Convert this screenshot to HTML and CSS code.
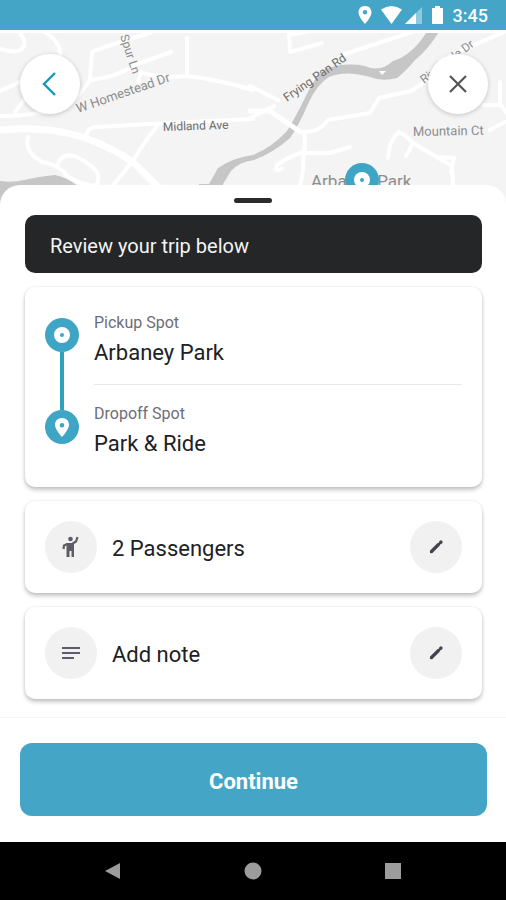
FILE: index.html
```html
<!DOCTYPE html>
<html lang="en">
<head>
<meta charset="utf-8">
<meta name="viewport" content="width=device-width, initial-scale=1">
<title>Review your trip</title>
<link rel="stylesheet" href="styles.css">
</head>
<body>
<div class="screen">
  <header class="status">
    <svg class="status-icons" width="84" height="20" viewBox="0 0 84 20" aria-hidden="true">
      <path fill="#fff" fill-rule="evenodd" d="M6 1C2 1-.5 3.800-.5 7.500-.5 12 6 19 6 19S12.500 12 12.500 7.500C12.500 3.800 10 1 6 1ZM6 5A2.200 2.200 0 1 1 6 9.400 2.200 2.200 0 0 1 6 5Z"/>
      <path fill="#fff" d="M22 4.500Q32.500-2.500 43 4.500L32.500 19Z"/>
      <path fill="#fff" opacity=".4" d="M63 2V19H46Z"/>
      <path fill="#fff" d="M57 8V19H46Z"/>
      <path fill="#fff" d="M76 1H81V3H84V19H73V3H76Z"/>
    </svg>
    <time class="clock">3:45</time>
  </header>

  <section class="map" aria-label="Map">
    <svg class="map-art" viewBox="0 30 506 180" preserveAspectRatio="xMidYMin slice">
      <rect y="30" width="506" height="180" fill="#f4f4f4"/>
      <g fill="#c6c6c6">
        <path d="M0 181Q12 183 24 180Q42 176 55 175Q66 177 78 186V210H0Z"/>
        <path d="M199 184H209L218 168Q232 158 253 155Q271 148 287 131Q295 118 306 96Q314 78 325 69Q345 62 365 66Q380 73 393 61Q413 55 428 30H440Q429 49 415 60Q405 72 397 78Q382 82 370 77Q345 70 329 77Q317 84 308 104Q298 127 290 138Q273 153 254 160Q239 162 231 171L223 184V190H199Z"/>
      </g>
      <g fill="none" stroke="#fff" stroke-width="4" stroke-linecap="round" stroke-linejoin="round">
        <path d="M0 31H506"/>
        <path d="M0 49Q20 55 24 46Q26 39 18 31"/>
        <path d="M43 31Q59 40 60 52V65"/>
        <path d="M0 91L22 81M15 112L24 100"/>
        <path d="M0 116Q45 116 70 103Q80 96 90 80Q115 78 135 65L171 52"/>
        <path d="M90 78L92 52Q112 44 150 33"/>
        <path d="M187 38V73M138 82L141 72Q157 79 187 76Q221 80 253 90"/>
        <path d="M86 138Q86 128 96 127L150 124L253 119"/>
        <path d="M28 137Q24 152 42 162Q60 165 67 176Q80 185 98 186"/>
        <path d="M58 164Q62 153 74 156Q89 162 97 172Q100 179 96 186"/>
        <path d="M159 124Q147 138 134 159L112 187"/>
        <path d="M289 35L290 52L322 43M289 35L310 31"/>
        <path d="M345 54L418 30M250 118L274 106M250 86L278 100"/>
        <path d="M300 132Q320 133 328 120L370 113L379 98L411 91L428 80"/>
        <path d="M304 133Q306 146 303 160Q305 171 298 190M306 153L330 153L350 147"/>
        <path d="M303 152Q286 158 277 165Q274 173 282 169"/>
        <path d="M440 60L506 31M483 105H500M500 82V104L506 112M490 130L505 122"/>
        <path d="M388 158Q389 140 399 132Q407 136 413 143L406 156M413 143L452 166L453 185M440 157L454 158L451 172"/>
      </g>
      <g fill="none" stroke="#fff" stroke-width="7" stroke-linecap="round">
        <path d="M0 130Q45 126 79 136Q118 149 137 166L158 187"/>
      </g>
      <path d="M250 111H270L299 131" fill="none" stroke="#fff" stroke-width="5" stroke-linecap="round"/>
      <path d="M379 71H386L382 75Z" fill="#fff"/>
      <g class="street">
        <text transform="translate(120 36) rotate(72)">Spur Ln</text>
        <text class="street-wide" transform="translate(78 113) rotate(-19)">W Homestead Dr</text>
        <text class="street-main" transform="translate(163 131) rotate(-2)">Midland Ave</text>
        <text class="street-main" transform="translate(287 102) rotate(-35)">Frying Pan Rd</text>
        <text transform="translate(424 84) rotate(-37)">Riverside Dr</text>
        <text class="street-wide" transform="translate(413 136) rotate(-1)">Mountain Ct</text>
      </g>
      <text class="place" x="311" y="187">Arbaney Park</text>
      <circle cx="362" cy="180" r="17" fill="#3fa5c4"/>
      <circle cx="362" cy="180" r="8" fill="#fff"/>
      <circle cx="362" cy="180" r="2" fill="#3fa5c4"/>
    </svg>
    <div class="map-actions">
      <button class="round" type="button" aria-label="Back">
        <svg width="24" height="24" viewBox="0 0 24 24" fill="none" stroke="#149ab8" stroke-width="2.400"><path d="M17 1L6 12L17 23"/></svg>
      </button>
      <button class="round" type="button" aria-label="Close">
        <svg width="20" height="20" viewBox="0 0 20 20" fill="none" stroke="#555" stroke-width="2.200"><path d="M2 2L18 18M18 2L2 18"/></svg>
      </button>
    </div>
  </section>

  <main class="sheet">
    <div class="grabber"></div>
    <div class="content">
      <h1 class="banner">Review your trip below</h1>

      <section class="card trip">
        <div class="route">
          <svg width="34" height="34" viewBox="0 0 34 34" aria-hidden="true"><circle cx="17" cy="17" r="17" fill="#3fa5c4"/><circle cx="17" cy="17" r="8" fill="#fff"/><circle cx="17" cy="17" r="2" fill="#3fa5c4"/></svg>
          <div class="route-line"></div>
          <svg width="34" height="34" viewBox="0 0 34 34" aria-hidden="true"><circle cx="17" cy="17" r="17" fill="#3fa5c4"/><path fill="#fff" fill-rule="evenodd" d="M17 8C12.500 8 10 11 10 15C10 19.500 17 27 17 27S24 19.500 24 15C24 11 21.500 8 17 8ZM17 13A2.300 2.300 0 1 1 17 17.600 2.300 2.300 0 0 1 17 13Z"/></svg>
        </div>
        <dl class="stops">
          <div class="stop"><dt>Pickup Spot</dt><dd>Arbaney Park</dd></div>
          <div class="stop"><dt>Dropoff Spot</dt><dd>Park &amp; Ride</dd></div>
        </dl>
      </section>

      <section class="card option">
        <span class="disc">
          <svg width="20" height="24" viewBox="0 0 20 24" aria-hidden="true"><circle cx="9.500" cy="4" r="2.300" fill="#5c5c66"/><path d="M16.500 2L15 6.500L11 9H6L3 10.500L2.500 14" fill="none" stroke="#5c5c66" stroke-width="2.200"/><path d="M5.500 8H13V22H10.500V16H8.500V22H5.500Z" fill="#5c5c66"/></svg>
        </span>
        <span class="option-text">2 Passengers</span>
        <button class="disc" type="button" aria-label="Edit passengers">
          <svg width="16" height="16" viewBox="0 0 16 16" aria-hidden="true"><path d="M3.500 12.500L10.500 5.500M12.500 3.500L13 3" fill="none" stroke="#44444f" stroke-width="3.200" stroke-linecap="round"/><path d="M2 11V14H5Z" fill="#44444f"/></svg>
        </button>
      </section>

      <section class="card option">
        <span class="disc">
          <svg width="18" height="14" viewBox="0 0 18 14" aria-hidden="true"><path d="M0 2H18M0 7H18M0 12H12" stroke="#5c5c6a" stroke-width="2"/></svg>
        </span>
        <span class="option-text">Add note</span>
        <button class="disc" type="button" aria-label="Edit note">
          <svg width="16" height="16" viewBox="0 0 16 16" aria-hidden="true"><path d="M3.500 12.500L10.500 5.500M12.500 3.500L13 3" fill="none" stroke="#44444f" stroke-width="3.200" stroke-linecap="round"/><path d="M2 11V14H5Z" fill="#44444f"/></svg>
        </button>
      </section>
    </div>
    <div class="footer">
      <button class="continue" type="button">Continue</button>
    </div>
  </main>

  <nav class="system" aria-label="System">
    <button type="button" aria-label="Back"><svg width="18" height="18" viewBox="0 0 18 18"><path d="M16 1V17L1 9Z" fill="#9c9c9c"/></svg></button>
    <button type="button" aria-label="Home"><svg width="18" height="18" viewBox="0 0 18 18"><circle cx="9" cy="9" r="8.500" fill="#9c9c9c"/></svg></button>
    <button type="button" aria-label="Recent apps"><svg width="18" height="18" viewBox="0 0 18 18"><path d="M1 1H17V17H1Z" fill="#9c9c9c"/></svg></button>
  </nav>
</div>
</body>
</html>
```
FILE: styles.css
```css
* { box-sizing: border-box; }

body {
  margin: 0;
  background: #fff;
  color: #202124;
  font-family: Roboto, "Liberation Sans", sans-serif;
}

button {
  border: 0;
  padding: 0;
  font: inherit;
  cursor: pointer;
}

.screen {
  display: flex;
  flex-direction: column;
  min-height: 100vh;
}

.status {
  display: flex;
  align-items: center;
  justify-content: flex-end;
  gap: 10px;
  height: 30px;
  padding: 0 18px;
  background: #45a5c6;
  color: #fff;
}

.status-icons { overflow: visible; }

.clock {
  padding-top: 2px;
  font-size: 18px;
  font-weight: 500;
  line-height: 28px;
}

.map {
  position: relative;
  height: 180px;
  overflow: hidden;
}

.map-art {
  position: absolute;
  inset: 0;
  width: 100%;
  height: 100%;
}

.street {
  font-size: 12px;
  fill: #8d8d8d;
}

.street-main { fill: #6c6c6c; }

.street-wide { font-size: 13px; }

.place {
  font-size: 17px;
  fill: #8d8d8d;
}

.map-actions {
  position: relative;
  display: flex;
  justify-content: space-between;
  padding: 24px 18px 0 20px;
}

.round {
  display: flex;
  align-items: center;
  justify-content: center;
  width: 60px;
  height: 60px;
  border-radius: 50%;
  background: #fff;
  box-shadow: 0 1px 5px rgba(0, 0, 0, 0.2);
}

.sheet {
  position: relative;
  display: flex;
  flex: 1;
  flex-direction: column;
  margin-top: -25px;
  border-radius: 20px 20px 0 0;
  background: #fff;
}

.grabber {
  width: 38px;
  height: 5px;
  margin: 13px auto 12px;
  border-radius: 3px;
  background: #2b2b2d;
}

.content {
  display: flex;
  flex: 1;
  flex-direction: column;
  gap: 14px;
  padding: 0 24px 18px 25px;
}

.banner {
  margin: 0;
  padding: 16px 25px 12px;
  border-radius: 10px;
  background: #242628;
  color: #f4f4f4;
  font-size: 20px;
  font-weight: 400;
  line-height: 30px;
}

.card {
  display: flex;
  border-radius: 10px;
  background: #fff;
  box-shadow: 0 3px 4px rgba(0, 0, 0, 0.22), 0 0 3px rgba(0, 0, 0, 0.1);
}

.trip {
  gap: 15px;
  padding: 26px 20px 28px;
}

.route {
  display: flex;
  flex-direction: column;
  align-items: center;
  padding: 5px 0 15px;
}

.route-line {
  flex: 1;
  width: 4px;
  background: #2fa1bd;
}

.stops {
  flex: 1;
  margin: 0;
}

.stop + .stop {
  margin-top: 16px;
  padding-top: 19px;
  border-top: 1px solid #e8e8e8;
}

.stop dt {
  color: #6d6d78;
  font-size: 16px;
  line-height: 20px;
}

.stop dd {
  margin: 5px 0 0;
  font-size: 22px;
  line-height: 30px;
}

.option {
  align-items: center;
  gap: 15px;
  padding: 20px;
}

.option-text {
  flex: 1;
  padding-top: 4px;
  font-size: 22px;
  line-height: 30px;
}

.disc {
  display: flex;
  align-items: center;
  justify-content: center;
  width: 52px;
  height: 52px;
  border-radius: 50%;
  background: #f1f1f1;
}

.footer {
  padding: 25px 19px 26px 20px;
  border-top: 1px solid #f4f4f4;
}

.continue {
  width: 100%;
  height: 73px;
  padding-top: 4px;
  border-radius: 12px;
  background: #45a5c6;
  color: #fff;
  font-size: 22px;
  font-weight: 700;
}

.system {
  display: flex;
  justify-content: center;
  gap: 122px;
  height: 58px;
  background: #000;
}

.system button {
  display: flex;
  align-items: center;
  background: none;
}
```
